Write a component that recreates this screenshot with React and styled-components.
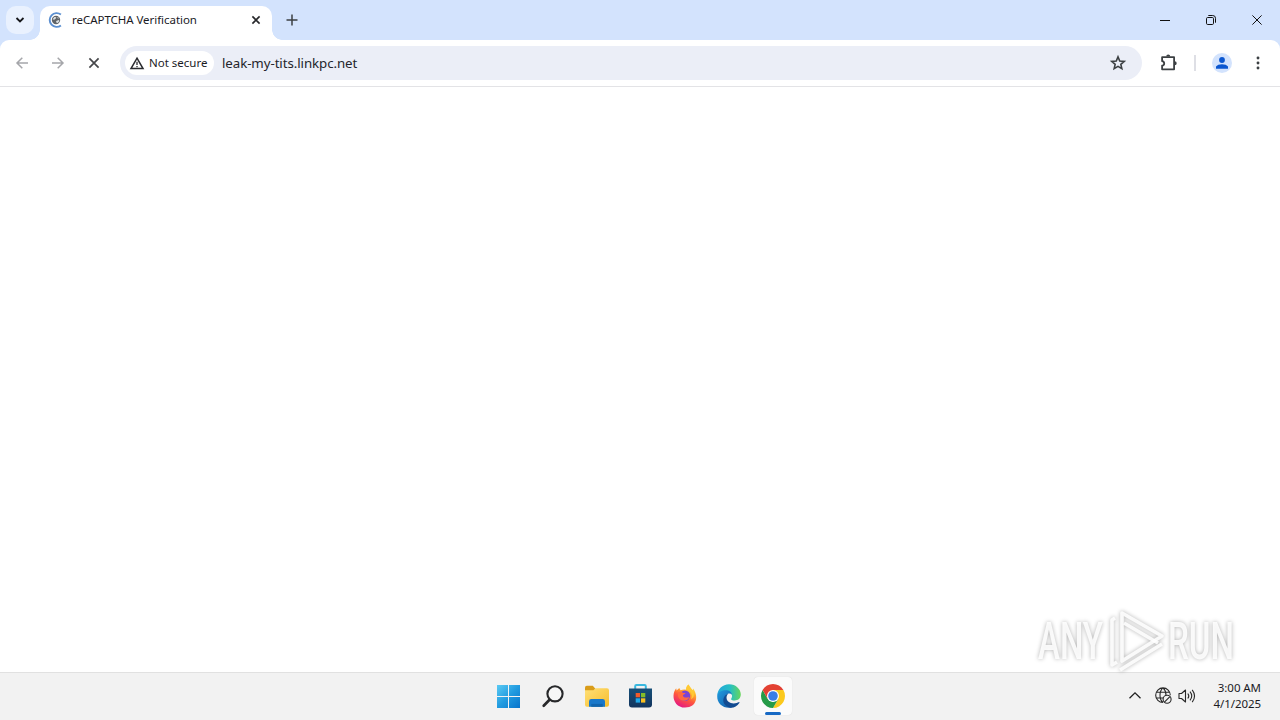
import React from 'react';
import styled, { createGlobalStyle } from 'styled-components';

const Global = createGlobalStyle`
  * { box-sizing: border-box; }
  html, body { margin: 0; overflow: hidden; background: #fff; }
  body { font-family: "Noto Sans", "Open Sans", sans-serif; color: #1b1b1f; }
  svg { display: block; flex: none; overflow: visible; }
`;

const Desktop = styled.div`
  position: relative;
  display: flex;
  flex-direction: column;
  width: 1280px;
  height: 720px;
`;

const TabStrip = styled.header`
  display: flex;
  height: 40px;
  flex: none;
  background: #d3e3fd;
  padding: 6px 0 0 6px;
`;

const TabSearch = styled.button`
  display: grid;
  place-items: center;
  width: 28px;
  height: 28px;
  border: 0;
  padding: 0;
  border-radius: 10px;
  background: #e9f1fe;
`;

const Tab = styled.div`
  position: relative;
  display: flex;
  align-items: center;
  width: 232px;
  height: 34px;
  margin-left: 6px;
  padding: 0 4px 6px 8px;
  border-radius: 10px 10px 0 0;
  background: #fff;
  &::before, &::after {
    content: "";
    position: absolute;
    bottom: 0;
    width: 10px;
    height: 10px;
  }
  &::before { left: -10px; background: radial-gradient(circle at 0 0, transparent 9.5px, #fff 10px); }
  &::after { right: -10px; background: radial-gradient(circle at 100% 0, transparent 9.5px, #fff 10px); }
`;

const TabTitle = styled.span`
  flex: none;
  width: 172px;
  margin-left: 8px;
  font-size: 11.5px;
  line-height: 16px;
  letter-spacing: -0.04px;
  white-space: nowrap;
`;

const IconButton = styled.button`
  display: grid;
  place-items: center;
  flex: none;
  width: ${p => p.$w || 36}px;
  height: ${p => p.$h || 28}px;
  border: 0;
  padding: 0;
  background: transparent;
  color: ${p => p.$color || '#3c4043'};
`;

const WindowControls = styled.div`
  display: flex;
  margin-left: auto;
`;

const ToolbarBack = styled.div`
  flex: none;
  background: #d3e3fd;
`;

const Toolbar = styled.nav`
  display: flex;
  align-items: center;
  height: 47px;
  padding: 0 4px;
  border-bottom: 1px solid #e3e3e6;
  border-radius: 9px 9px 0 0;
  background: #fff;
`;

const AddressBar = styled.div`
  display: flex;
  align-items: center;
  flex: none;
  width: 1022px;
  height: 34px;
  margin-left: 8px;
  padding: 0 6px 0 5px;
  border-radius: 17px;
  background: #ebeef7;
`;

const SecurityChip = styled.div`
  display: flex;
  align-items: center;
  gap: 5px;
  width: 89px;
  height: 24px;
  padding-left: 5px;
  border-radius: 12px;
  background: #fff;
  font-size: 11.5px;
  line-height: 16px;
  letter-spacing: 0;
  white-space: nowrap;
`;

const Url = styled.span`
  flex: 1;
  margin-left: 8px;
  font-size: 13.3px;
  line-height: 20px;
  letter-spacing: -0.08px;
  color: #24252b;
`;

const Divider = styled.i`
  width: 2px;
  height: 16px;
  margin-right: 8px;
  background: #dedfe5;
`;

const Avatar = styled.span`
  display: grid;
  place-items: center;
  width: 20px;
  height: 20px;
  border-radius: 50%;
  background: #d3e3fd;
`;

const Page = styled.main`
  flex: 1;
  background: #fff;
`;

const Taskbar = styled.footer`
  display: grid;
  grid-template-columns: 1fr 308px 1fr;
  flex: none;
  height: 48px;
  padding: 0 0 1px 1px;
  border-top: 1px solid #e1e1e1;
  background: #f2f2f2;
`;

const Apps = styled.div`
  grid-column: 2;
  display: flex;
  align-items: center;
`;

const AppSlot = styled.div`
  display: flex;
  justify-content: center;
  width: 44px;
`;

const AppTile = styled.div`
  position: relative;
  display: grid;
  place-items: center;
  width: 38px;
  height: 38px;
  border-radius: 4px;
  background: ${p => (p.$active ? '#fbfbfb' : 'transparent')};
  box-shadow: ${p => (p.$active ? '0 0 1px #d0d0d0' : 'none')};
  &::after {
    content: "";
    display: ${p => (p.$active ? 'block' : 'none')};
    position: absolute;
    bottom: 0;
    width: 16px;
    height: 3px;
    border-radius: 2px;
    background: #1769c4;
  }
`;

const Tray = styled.div`
  display: flex;
  align-items: center;
  justify-content: flex-end;
  padding: 0 19px 1px 0;
`;

const TrayIcons = styled.div`
  display: flex;
  align-items: center;
  gap: 6px;
  margin-right: 17px;
`;

const Clock = styled.div`
  width: 48px;
  display: flex;
  flex-direction: column;
  align-items: flex-end;
  font-size: 11.5px;
  line-height: 16px;
  letter-spacing: -0.06px;
  white-space: nowrap;
`;

const Watermark = styled.div`
  position: absolute;
  left: 1030px;
  top: 606px;
  filter: drop-shadow(0 0 2px rgba(0, 0, 0, 0.34));
`;

const Cross = ({ size = 8, stroke = 1.8 }) => (
  <svg width={size} height={size} viewBox={`0 0 ${size} ${size}`} stroke="currentColor" strokeWidth={stroke}>
    <path d={`M.4.4L${size - 0.4} ${size - 0.4}M${size - 0.4}.4L.4 ${size - 0.4}`} />
  </svg>
);

const Favicon = () => (
  <svg width="16" height="16" viewBox="0 0 16 16" fill="none">
    <path d="M12.9 2.6A6.9 6.9 0 1 0 12.9 13.4" stroke="#5b8fd0" strokeWidth="1.9" />
    <circle cx="8" cy="8" r="4.2" fill="#606468" />
    <path d="M4.6 7.2L6.4 5l2 .2-.8 1.6-1.5 1zM8.2 9l2.6-1 .6.9-1.6 2.2-1.6-.5zM9.2 4.7l1.7 1.2-.9.8z" fill="#dce2e5" />
  </svg>
);

const Arrow = ({ back }) => (
  <svg width="12" height="12" viewBox="0 0 12 12" fill="none" stroke="currentColor" strokeWidth="1.5">
    <path d={back ? 'M12 6H1M6.3.7L1 6l5.3 5.3' : 'M0 6h11M5.7.7L11 6l-5.3 5.3'} />
  </svg>
);

const Warning = () => (
  <svg width="14" height="13" viewBox="0 0 14 13" fill="none" stroke="#2b2c30">
    <path d="M7 1.2L13 11.5H1z" strokeWidth="1.5" />
    <path d="M7 4.7v3.4M7 8.9v1.3" strokeWidth="1.3" />
  </svg>
);

const Star = () => (
  <svg width="16" height="16" viewBox="0 0 16 16" fill="none" stroke="currentColor" strokeWidth="1.6">
    <path d="M8 1.9l1.75 4.1 4.5.4-3.4 2.95 1 4.35L8 11.4l-3.85 2.3 1-4.35-3.4-2.95 4.5-.4z" />
  </svg>
);

const Puzzle = () => (
  <svg width="16" height="18" viewBox="0 0 16 18">
    <path d="M2.1 3.2h12v12.1h-12v-3.7c2.8-.4 2.8-4 0-4.4z" fill="none" stroke="currentColor" strokeWidth="1.8" strokeLinejoin="round" />
    <path d="M6.2 2.6a2 2 0 0 1 4 0zM14.7 7.3a2 2 0 0 1 0 4z" fill="currentColor" />
  </svg>
);

const WindowsLogo = () => (
  <svg width="23" height="23" viewBox="0 0 23 23">
    <defs><linearGradient id="win" x1="0" y1="0" x2="23" y2="23" gradientUnits="userSpaceOnUse">
      <stop stopColor="#5bcaf3" /><stop offset=".5" stopColor="#219be0" /><stop offset="1" stopColor="#0873cb" />
    </linearGradient></defs>
    <path d="M0 0h11v11H0zM12 0h11v11H12zM0 12h11v11H0zM12 12h11v11H12z" fill="url(#win)" />
  </svg>
);

const SearchIcon = () => (
  <svg width="22" height="22" viewBox="0 0 22 22" fill="none" stroke="#27282a">
    <circle cx="13" cy="8.8" r="7.6" strokeWidth="2.1" fill="#f7f7f7" />
    <path d="M7.5 14.8l-5.8 5.9" strokeWidth="2.7" strokeLinecap="round" />
  </svg>
);

const Folder = () => (
  <svg width="24" height="23" viewBox="0 0 24 23">
    <defs><linearGradient id="folder" x1="0" y1="0" x2="1" y2="1"><stop stopColor="#ffe078" /><stop offset="1" stopColor="#f7bd2b" /></linearGradient></defs>
    <path d="M0 2.5Q0 .7 1.8.7h6l2.6 3L8 7H0z" fill="#d99c19" />
    <path d="M0 5.2h8.5l2-1.9H22a2 2 0 0 1 2 2v14.5a2 2 0 0 1-2 2H2a2 2 0 0 1-2-2z" fill="url(#folder)" />
    <path d="M4 21.8v-5.3q0-2.4 2.4-2.4h11.2q2.4 0 2.4 2.4v5.3z" fill="#1978ca" />
    <path d="M6.3 18.9h11.4v2.9H6.3z" fill="#1165ae" />
  </svg>
);

const Store = () => (
  <svg width="24" height="24" viewBox="0 0 24 24">
    <defs><linearGradient id="bag" x2="0" y2="1"><stop stopColor="#174f78" /><stop offset="1" stopColor="#12345d" /></linearGradient></defs>
    <path d="M6.2 5V2.2Q6.2 1 7.4 1h8.2q1.2 0 1.2 1.2V5" fill="none" stroke="#39b8df" strokeWidth="2" />
    <path d="M0 4.5h23v16a3 3 0 0 1-3 3H3a3 3 0 0 1-3-3z" fill="url(#bag)" />
    <path d="M6.7 9H11v4.3H6.7z" fill="#f05a2a" /><path d="M12 9h4.3v4.3H12z" fill="#83bd28" />
    <path d="M6.7 14.3H11v4.3H6.7z" fill="#20a8e8" /><path d="M12 14.3h4.3v4.3H12z" fill="#f8be20" />
  </svg>
);

const Firefox = () => (
  <svg width="24" height="24" viewBox="0 0 24 24">
    <defs><linearGradient id="fox" x1=".8" y1="0" x2=".3" y2="1">
      <stop stopColor="#fff44f" /><stop offset=".3" stopColor="#ffb42e" /><stop offset=".6" stopColor="#ff583d" /><stop offset="1" stopColor="#e31587" />
    </linearGradient></defs>
    <path d="M3.2 4.2l.4 2.4L6.3 4l1.2 2.3c1.9-.9 3.8-1.1 5.6-.6-.3-2.3.8-4.1 2.4-5.3.3 3.1 2 4 4.2 5.8l.4-1.6c5.3 6.4 4.5 19-8 19C4.4 23.6.3 17.6.5 11.7.6 8.5 1.7 6 3.2 4.2z" fill="url(#fox)" />
    <circle cx="12" cy="11.7" r="5.2" fill="#7b43d6" />
    <path d="M5.3 8.2c1.8-1 3.7-.6 4.8.7l2.4.2c-.2 1.3-2.2 1.5-2.6 2.1-.2 2.2 3 3.1 6.3 1.8-.6 4.4-8.8 5.2-10.8.3-.7-1.8-.7-3.6-.1-5.1z" fill="#ff6942" />
    <path d="M13.3 5.7c4.9 1.2 6.9 5.6 4.5 9.7 4.1-2 4.2-7.2 1.2-10L15.5.4c-1.5 1.2-2.5 3-2.2 5.3z" fill="#ffc935" />
  </svg>
);

const Edge = () => (
  <svg width="24" height="24" viewBox="0 0 24 24">
    <defs>
      <linearGradient id="edgeTop"><stop stopColor="#23a5db" /><stop offset=".55" stopColor="#26bfc3" /><stop offset="1" stopColor="#68d65b" /></linearGradient>
      <linearGradient id="edgeSide" x2="1" y2="1"><stop stopColor="#209ce0" /><stop offset="1" stopColor="#1257a5" /></linearGradient>
    </defs>
    <path d="M.2 11.8C.4 5.2 5.5.2 12 .2c7 0 11.8 5 11.8 10.1 0 4.4-3 6.2-6 6.2-2.5 0-4.1-.9-3.7-1.6 2.6-3.5-.1-7.1-4.7-7.1C5 7.8 1.3 8.9.2 11.8z" fill="url(#edgeTop)" />
    <path d="M.2 12C.4 8.9 4 6.2 8.6 6.2c3.7 0 6.1 2 6.4 4.6-1-1.2-2.3-1.7-3.6-1.2-2.3.9-4.5 4.6-2.9 8.1 1.1 2.6 3.1 4.8 6.6 5.8C6.7 25.3-.1 19.6.2 12z" fill="url(#edgeSide)" />
    <path d="M11.4 9.6c-3 2-3.1 9.8 5.2 9.8 2.4 0 4.2-.8 5.1-1.2.6-.3 1 .1.6.7-2 3-5.2 4.9-8.4 4.8-5.6-.7-8.7-5.1-7.3-9.4.7-2.1 2.5-4 4.8-4.7z" fill="#124b91" />
  </svg>
);

const Chrome = () => (
  <svg width="24" height="24" viewBox="0 0 24 24">
    <path d="M12 6h10.39A12 12 0 0 1 12 24l5.2-9z" fill="#fbc91d" />
    <path d="M1.61 6l5.2 9L12 18l5.2-3L12 24A12 12 0 0 1 1.61 6z" fill="#269b48" />
    <path d="M1.61 6A12 12 0 0 1 22.39 6H12L6.8 15z" fill="#e34133" />
    <circle cx="12" cy="12" r="6" fill="#fff" /><circle cx="12" cy="12" r="4.8" fill="#397ee7" />
  </svg>
);

const NetworkIcon = () => (
  <svg width="17" height="18" viewBox="0 0 17 18" fill="none" stroke="#292929" strokeWidth="1.1">
    <path d="M8 15.5A7.3 7.3 0 1 1 15.3 8.2M8 .9C4 4.3 4 12 8 15.5M8 .9c2 1.8 3 4.2 3 7M1.5 5.2h13M1.5 11h7" />
    <circle cx="12.1" cy="12.3" r="4" fill="#f2f2f2" /><path d="M9.4 15.1l5.5-5.5" />
  </svg>
);

const Speaker = () => (
  <svg width="18" height="16" viewBox="0 0 18 16" fill="none" stroke="#292929" strokeWidth="1.1">
    <path d="M1 5.5h2.5L7.5 2v12l-4-3.5H1z" strokeLinejoin="round" />
    <path d="M9.8 5.5q2 2.5 0 5M12 3.6q3.5 4.4 0 8.8M14.2 1.8q4.7 6.2 0 12.4" />
  </svg>
);

const apps = [WindowsLogo, SearchIcon, Folder, Store, Firefox, Edge, Chrome];

export default function App() {
  return (
    <Desktop>
      <Global />
      <TabStrip>
        <TabSearch aria-label="Search tabs">
          <svg width="8" height="6" viewBox="0 0 8 6" fill="none" stroke="#17181b" strokeWidth="1.8"><path d="M.5 1L4 4.5 7.5 1" /></svg>
        </TabSearch>
        <Tab>
          <Favicon />
          <TabTitle>reCAPTCHA Verification</TabTitle>
          <IconButton $w={24} $h={24} $color="#27282b" aria-label="Close tab"><Cross size={8} stroke={1.6} /></IconButton>
        </Tab>
        <IconButton $w={40} aria-label="New tab">
          <svg width="12" height="12" viewBox="0 0 12 12" stroke="currentColor" strokeWidth="1.5"><path d="M6 .5v11M.5 6h11" /></svg>
        </IconButton>
        <WindowControls>
          <IconButton $w={46} $color="#111" aria-label="Minimize">
            <svg width="10" height="2" viewBox="0 0 10 2"><path d="M0 1h10v1H0z" fill="currentColor" /></svg>
          </IconButton>
          <IconButton $w={46} $color="#111" aria-label="Restore">
            <svg width="10" height="10" viewBox="0 0 10 10" fill="none" stroke="currentColor">
              <rect x=".5" y="2.5" width="7" height="7" rx="1.2" /><path d="M2.3.5h4.4q2.8 0 2.8 2.8v4.4" />
            </svg>
          </IconButton>
          <IconButton $w={46} $color="#111" aria-label="Close"><Cross size={10} stroke={1} /></IconButton>
        </WindowControls>
      </TabStrip>
      <ToolbarBack>
        <Toolbar>
          <IconButton $color="#a5a6aa" aria-label="Back"><Arrow back /></IconButton>
          <IconButton $color="#a5a6aa" aria-label="Forward"><Arrow /></IconButton>
          <IconButton $color="#46474a" aria-label="Stop"><Cross size={10} stroke={1.7} /></IconButton>
          <AddressBar>
            <SecurityChip><Warning />Not secure</SecurityChip>
            <Url>leak-my-tits.linkpc.net</Url>
            <IconButton aria-label="Bookmark"><Star /></IconButton>
          </AddressBar>
          <IconButton $w={52} aria-label="Extensions"><Puzzle /></IconButton>
          <Divider />
          <IconButton aria-label="Profile">
            <Avatar><svg width="12" height="12" viewBox="0 0 12 12" fill="#0b57d0"><circle cx="6" cy="3" r="2.9" /><path d="M0 11.8V9.6C1.8 6.3 10.2 6.3 12 9.6v2.2z" /></svg></Avatar>
          </IconButton>
          <IconButton aria-label="Menu">
            <svg width="4" height="14" viewBox="0 0 4 14" fill="currentColor"><circle cx="2" cy="2" r="1.45" /><circle cx="2" cy="7" r="1.45" /><circle cx="2" cy="12" r="1.45" /></svg>
          </IconButton>
        </Toolbar>
      </ToolbarBack>
      <Page />
      <Taskbar>
        <Apps>
          {apps.map((Icon, i) => <AppSlot key={i}><AppTile $active={i === 6}><Icon /></AppTile></AppSlot>)}
        </Apps>
        <Tray>
          <TrayIcons>
            <IconButton $w={28} $color="#222" aria-label="Hidden icons">
              <svg width="12" height="7" viewBox="0 0 12 7" fill="none" stroke="currentColor" strokeWidth="1.3"><path d="M.5 6.3L6 .9l5.5 5.4" /></svg>
            </IconButton>
            <NetworkIcon />
            <Speaker />
          </TrayIcons>
          <Clock><span>3:00 AM</span><span>4/1/2025</span></Clock>
        </Tray>
      </Taskbar>
      <Watermark>
        <svg width="210" height="70" viewBox="0 0 210 70">
          <g fill="#fff" fillOpacity=".88" fontFamily="Roboto" fontWeight="500" fontSize="51">
            <text x="8" y="53" textLength="65" lengthAdjust="spacingAndGlyphs">ANY</text>
            <text x="138" y="53" textLength="66" lengthAdjust="spacingAndGlyphs">RUN</text>
          </g>
          <g fill="none" stroke="#fff" strokeOpacity=".88" strokeWidth="3.6" strokeLinejoin="round">
            <path d="M92 49V7l40 23-40 25z" />
            <path d="M85 12l-3 2v45l5-3M90 64l42-26M94 17l34 20" />
          </g>
        </svg>
      </Watermark>
    </Desktop>
  );
}
